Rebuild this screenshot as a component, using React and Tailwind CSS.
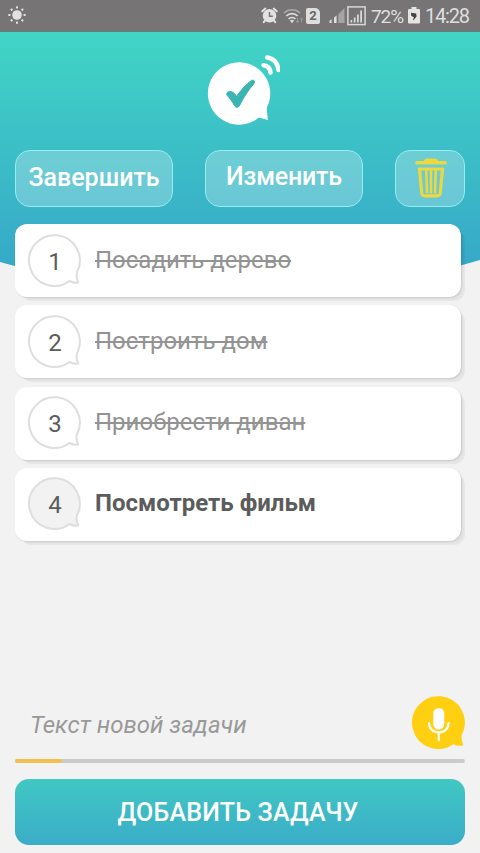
import React, { useState } from 'react';

const TASKS = [
    { id: 1, title: 'Посадить дерево', done: true },
    { id: 2, title: 'Построить дом', done: true },
    { id: 3, title: 'Приобрести диван', done: true },
    { id: 4, title: 'Посмотреть фильм', done: false },
];

// round speech bubble with the tail at the bottom right, 54x54
const BUBBLE = 'M50.3 48.6C47.2 49 44.3 48.5 41.5 47A25.4 25.4 0 1 1 49 38.2C48 41.8 48.5 45 50.3 48.6Z';

const StatusBar = () => (
    <div className="relative flex h-8 shrink-0 items-center border-b border-[#5d817c] bg-[#767475] text-[#dfdfdf]">
        <svg className="ml-2 -mt-0.5 h-[18px] w-[18px]" viewBox="0 0 18 18" fill="#e2e2e2">
            <circle cx="9" cy="9" r="4.8" />
            {[0, 45, 90, 135, 180, 225, 270, 315].map((angle) => (
                <rect key={angle} x="8" y="0.3" width="2" height="2.2" rx="0.5" transform={`rotate(${angle} 9 9)`} />
            ))}
        </svg>
        <svg className="ml-auto -mr-1 h-[17px] w-[17px] -translate-x-0.5" viewBox="0 0 17 17">
            <path d="M1.3 4.3 4.3 1.6M15.7 4.3 12.7 1.6M4 13.5 2.8 15.2M13 13.5l1.2 1.7" stroke="#e2e2e2" strokeWidth="2" strokeLinecap="round" />
            <circle cx="8.5" cy="8.8" r="6.8" fill="#e2e2e2" />
            <path d="M8.5 5v4.3h3.4" fill="none" stroke="#767475" strokeWidth="1.4" />
        </svg>
        <svg className="ml-[7px] h-4 w-[21px]" viewBox="0 0 21 16" fill="none" stroke="#dedede" strokeWidth="1.7">
            <path d="M1 5 A11.5 11.5 0 0 1 17 5" stroke="#a9a9a9" />
            <path d="M3.3 8 A8.2 8.2 0 0 1 14.7 8" />
            <path d="M5.6 10.9 A5 5 0 0 1 12.4 10.9" />
            <path d="M6.9 12.6 9 15.2 11.1 12.6A3.4 3.4 0 0 0 6.9 12.6Z" fill="#dedede" stroke="none" />
            <path d="M14.5 10v4.5M13 13l1.5 1.6 1.5-1.6M18.5 14.5V10M17 11.5 18.5 9.9 20 11.5" stroke="#999" strokeWidth="1" />
        </svg>
        <div className="ml-0.5 flex h-4 w-[14px] items-center justify-center rounded-[2px] rounded-tr-[5px] bg-[#dedede] text-[13px] font-bold leading-none text-[#666]">2</div>
        <svg className="ml-[9px] h-[17px] w-4" viewBox="0 0 16 17">
            <path d="M0.5 13.8 2.6 12.2V16H0.5zM5 10.4l2.6-2V16H5z" fill="#dedede" />
            <path d="M9.3 7.2 15.5 1V16H9.3z" fill="#a5a5a5" />
        </svg>
        <svg className="ml-[2px] h-5 w-[19px]" viewBox="0 0 19 20">
            <rect x="0.9" y="0.9" width="17.2" height="17.7" fill="none" stroke="#d8d8d8" strokeWidth="1.5" />
            <path d="M3.5 14h1.7v2.5H3.5zM6.8 11.5h1.8v5H6.8zM10 8.5h1.8v8H10zM13.2 4.5H15v12h-1.8z" fill="#d8d8d8" />
        </svg>
        <span className="ml-[5px] w-[32px] whitespace-nowrap pt-px text-[19px] leading-none tracking-[-1.1px]">72%</span>
        <svg className="ml-[5px] h-[17px] w-3" viewBox="0 0 12 17">
            <path d="M3.5 0h5v2H11q1 0 1 1v12.5q0 1-1 1H1q-1 0-1-1V3q0-1 1-1h2.5z" fill="#e4e4e4" />
            <path d="M3 5.8 8.2 6.6 8.6 9.4 5 13.7 5.8 10.2 3.2 8.8z" fill="#444" />
        </svg>
        <span className="ml-[5px] mr-[11px] w-[44px] whitespace-nowrap pt-px text-[20px] leading-none tracking-[-1.2px]">14:28</span>
    </div>
);

const Logo = () => (
    <svg className="mt-[21px] h-[76px] w-20 shrink-0" viewBox="199.5 53 80 76">
        <path d="M267.3 120 L266.2 108 A31.2 31.2 0 1 0 258.5 117.5 Z" fill="#fff" />
        <path d="M226.5 95.2C225.2 92.4 228.6 90.6 231.8 92.1 233.8 93 234.7 94.2 236 96.6 241 89.2 245.7 84.2 250.9 80.6 253.4 79 255 81.8 253.3 83.8 247.7 90.3 243.3 97.2 239.2 105.2 237.8 108.1 235.3 108 233.9 105.4 231.4 101 229.4 98.4 226.5 95.2Z" fill="#3bb5b2" stroke="#3bb5b2" />
        <path d="M263 65.3C267 65.8 269.6 68.7 270 72.5M266.7 57.5C273 58 277.5 63.3 278 70" fill="none" stroke="#fff" strokeWidth="4.4" strokeLinecap="round" />
    </svg>
);

const TrashIcon = () => (
    <svg className="ml-0.5 mb-px h-10 w-8" viewBox="0 0 32 40" fill="none" stroke="#ecd83f">
        <path d="M0.3 4.2q.3-1.2 1.8-1.2H8.8q.6-2.5 2.7-2.5h9q2.1 0 2.7 2.5h6.7q1.5 0 1.8 1.2V6.5H.3z" fill="#ecd83f" stroke="none" />
        <path d="M4.5 11h23L25.2 35.4q-.3 2.4-2.9 2.4H9.7q-2.6 0-2.9-2.4z" strokeWidth="3.2" />
        <path d="M11.2 11l.8 24.5M16 11v24.5M20.8 11l-.8 24.5" strokeWidth="2.6" />
    </svg>
);

const ActionButton = ({ className, children }) => (
    <button className={`flex h-[57px] shrink-0 items-center justify-center whitespace-nowrap rounded-[15px] border border-[#96edf1] bg-white/25 font-medium text-white ${className}`}>
        {children}
    </button>
);

const TaskRow = ({ task }) => (
    <div className="flex h-[73px] w-[446px] items-center rounded-xl bg-white pl-[13px] shadow-[5px_5px_1px_-1px_rgba(0,0,0,0.05),1px_1px_2px_rgba(0,0,0,0.12)]">
        <div className="relative h-[54px] w-[54px] shrink-0">
            <svg className="h-full w-full" viewBox="0 0 54 54">
                <path d={BUBBLE} fill={task.done ? '#fff' : '#f2f2f2'} stroke="#dedede" strokeWidth="2" strokeLinejoin="round" />
            </svg>
            <span className="absolute inset-0 flex items-center justify-center pt-0.5 text-[24px] text-[#5c5c5c]">{task.id}</span>
        </div>
        <span
            className={`ml-[13px] whitespace-nowrap text-[24px] leading-8 ${
                task.done ? 'pb-0.5 text-[#939393] line-through decoration-[1.5px]' : 'pb-0.5 font-bold text-[#5c5c5c]'
            }`}
        >
            {task.title}
        </span>
    </div>
);

const App = () => {
    const [text, setText] = useState('');

    return (
        <div className="relative flex h-[853px] w-[480px] flex-col overflow-hidden bg-[#f2f2f2] font-['Roboto','Liberation_Sans',sans-serif]">
            {/* curved header background */}
            <svg className="absolute left-0 top-0" width="480" height="300" viewBox="0 0 480 300">
                <defs>
                    <linearGradient id="header" x1="0" y1="31" x2="0" y2="275" gradientUnits="userSpaceOnUse">
                        <stop offset="0" stopColor="#41d5c5" />
                        <stop offset="1" stopColor="#36a7c9" />
                    </linearGradient>
                </defs>
                <path d="M0 0H480V260Q240 332 0 262Z" fill="url(#header)" />
            </svg>
            <StatusBar />
            <main className="relative flex flex-1 flex-col px-[15px]">
                <div className="flex justify-center">
                    <Logo />
                </div>
                <div className="mt-[21px] flex justify-between">
                    <ActionButton className="w-[158px] pb-0.5 text-[25px]">Завершить</ActionButton>
                    <ActionButton className="w-[158px] pb-1 text-[25px] tracking-[-0.2px]">Изменить</ActionButton>
                    <ActionButton className="w-[70px]"><TrashIcon /></ActionButton>
                </div>
                <div className="mt-[17px] flex flex-col gap-[8.3px]">
                    {TASKS.map((task) => (
                        <TaskRow key={task.id} task={task} />
                    ))}
                </div>
                <div className="mt-auto flex items-center justify-between">
                    <input
                        value={text}
                        onChange={(e) => setText(e.target.value)}
                        placeholder="Текст новой задачи"
                        className="w-[340px] bg-transparent pl-[15px] pt-1 text-[24px] italic outline-none placeholder:text-[#999]"
                    />
                    <svg className="-mr-px h-[54px] w-[54px]" viewBox="0 0 54 54">
                        <path d={BUBBLE} fill="#ffd012" stroke="#ffd012" strokeWidth="2" strokeLinejoin="round" />
                        <rect x="21.3" y="12" width="11" height="21.5" rx="5.5" fill="#fff" />
                        <path d="M17 27C17 32.5 21 36.3 26.8 36.3S36.6 32.5 36.6 27M26.8 36.3v8" fill="none" stroke="#fff" strokeWidth="2.2" strokeLinecap="round" />
                    </svg>
                </div>
                <div className="mt-[9px] h-1 shrink-0 overflow-hidden rounded-full bg-[#cacaca]">
                    <div className="h-full w-[47px] rounded-r-full bg-[#f4bf4d]" />
                </div>
                <button className="mb-2 mt-4 h-[66px] shrink-0 whitespace-nowrap rounded-[14px] bg-linear-to-b from-[#42c7c3] to-[#3aadc8] pr-1 pt-0.5 text-[25px] font-medium tracking-[0.2px] text-white">
                    ДОБАВИТЬ ЗАДАЧУ
                </button>
            </main>
        </div>
    );
};

export default App;
